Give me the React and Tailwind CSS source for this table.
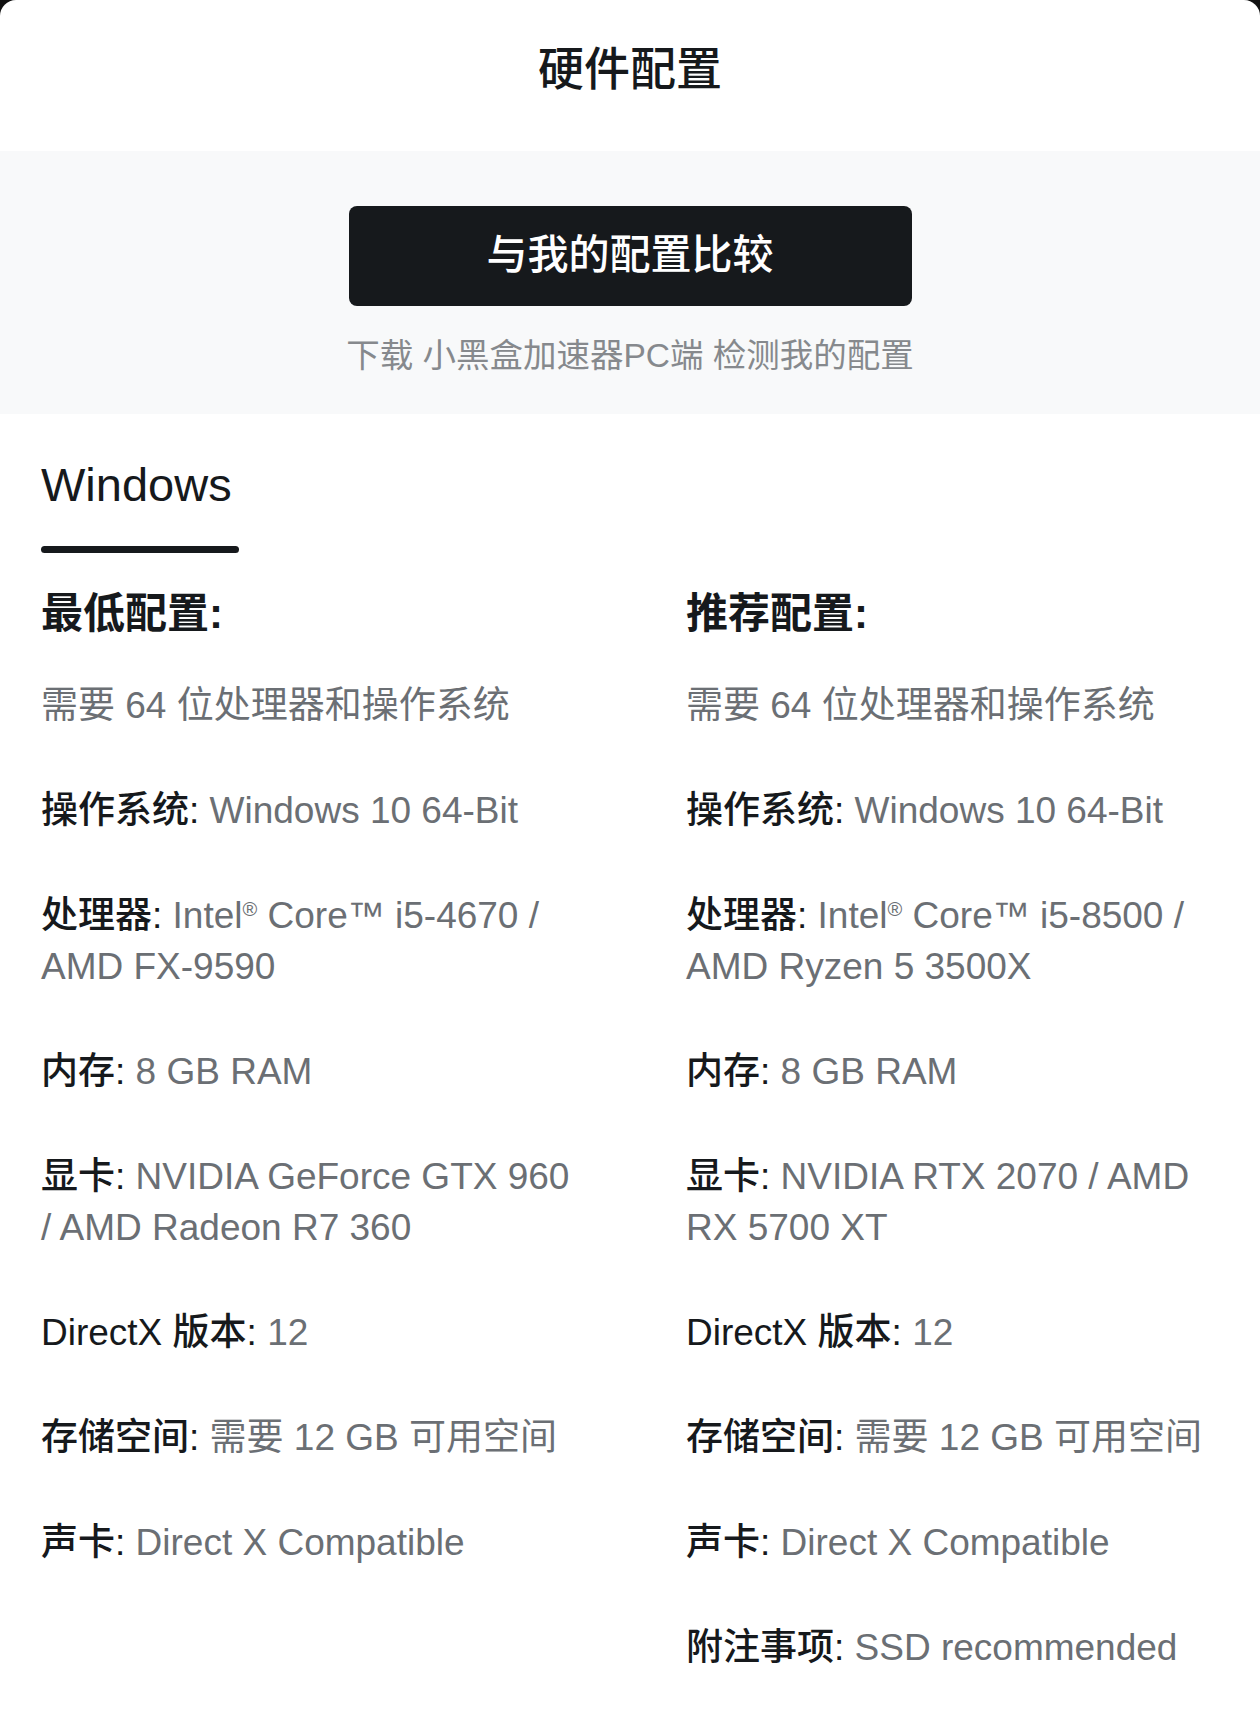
import React from "react";

const R = () => (
  <span className="text-[20px] leading-none align-[12px]">®</span>
);

const minItems = [
  { v: "需要 64 位处理器和操作系统" },
  { k: "操作系统", v: "Windows 10 64-Bit" },
  { k: "处理器", v: <>Intel<R /> Core™ i5-4670 / AMD FX-9590</> },
  { k: "内存", v: "8 GB RAM" },
  { k: "显卡", v: "NVIDIA GeForce GTX 960 / AMD Radeon R7 360" },
  { k: "DirectX 版本", v: "12" },
  { k: "存储空间", v: "需要 12 GB 可用空间" },
  { k: "声卡", v: "Direct X Compatible" },
];

const recItems = [
  { v: "需要 64 位处理器和操作系统" },
  { k: "操作系统", v: "Windows 10 64-Bit" },
  { k: "处理器", v: <>Intel<R /> Core™ i5-8500 / AMD Ryzen 5 3500X</> },
  { k: "内存", v: "8 GB RAM" },
  { k: "显卡", v: "NVIDIA RTX 2070 / AMD RX 5700 XT" },
  { k: "DirectX 版本", v: "12" },
  { k: "存储空间", v: "需要 12 GB 可用空间" },
  { k: "声卡", v: "Direct X Compatible" },
  { k: "附注事项", v: "SSD recommended" },
];

function Column({ title, items }) {
  return (
    <div className="min-w-0">
      <div className="text-[42px] leading-[60px] font-semibold text-[#16191c] mb-[36px]">
        {title}:
      </div>
      <div className="flex flex-col gap-[54px] text-[37px] leading-[51px]">
        {items.map((it, i) => (
          <div key={i} className="text-[#6b6f74]">
            {it.k && (
              <span className="font-medium text-[#16191c]">{it.k}: </span>
            )}
            {it.v}
          </div>
        ))}
      </div>
    </div>
  );
}

export default function App() {
  return (
    <div className="bg-[#111111] font-['Liberation_Sans','Noto_Sans_CJK_SC',sans-serif]">
      <div className="bg-white rounded-t-[16px] min-h-[1717px]">
        <div className="h-[151px] pt-[39px] text-center text-[46px] leading-[60px] font-medium text-[#16191c]">
          硬件配置
        </div>
        <div className="bg-[#f8f9fa] pt-[55px] pb-[36px] flex flex-col items-center">
          <div className="w-[563px] h-[100px] rounded-[8px] bg-[#16191c] flex items-center justify-center text-white text-[41px] font-medium">
            与我的配置比较
          </div>
          <div className="mt-[28px] text-[33.5px] leading-[44px] text-[#86898d]">
            下载 小黑盒加速器PC端 检测我的配置
          </div>
        </div>
        <div className="px-[41px] pt-[42px] pb-[40px]">
          <div className="inline-flex flex-col">
            <div className="text-[47px] leading-[58px] text-[#16191c]">Windows</div>
            <div className="mt-[32px] h-[7px] w-[198px] rounded-full bg-[#16191c]" />
          </div>
          <div className="grid grid-cols-2 gap-x-[112px] mt-[31px]">
            <Column title="最低配置" items={minItems} />
            <Column title="推荐配置" items={recItems} />
          </div>
        </div>
      </div>
    </div>
  );
}
